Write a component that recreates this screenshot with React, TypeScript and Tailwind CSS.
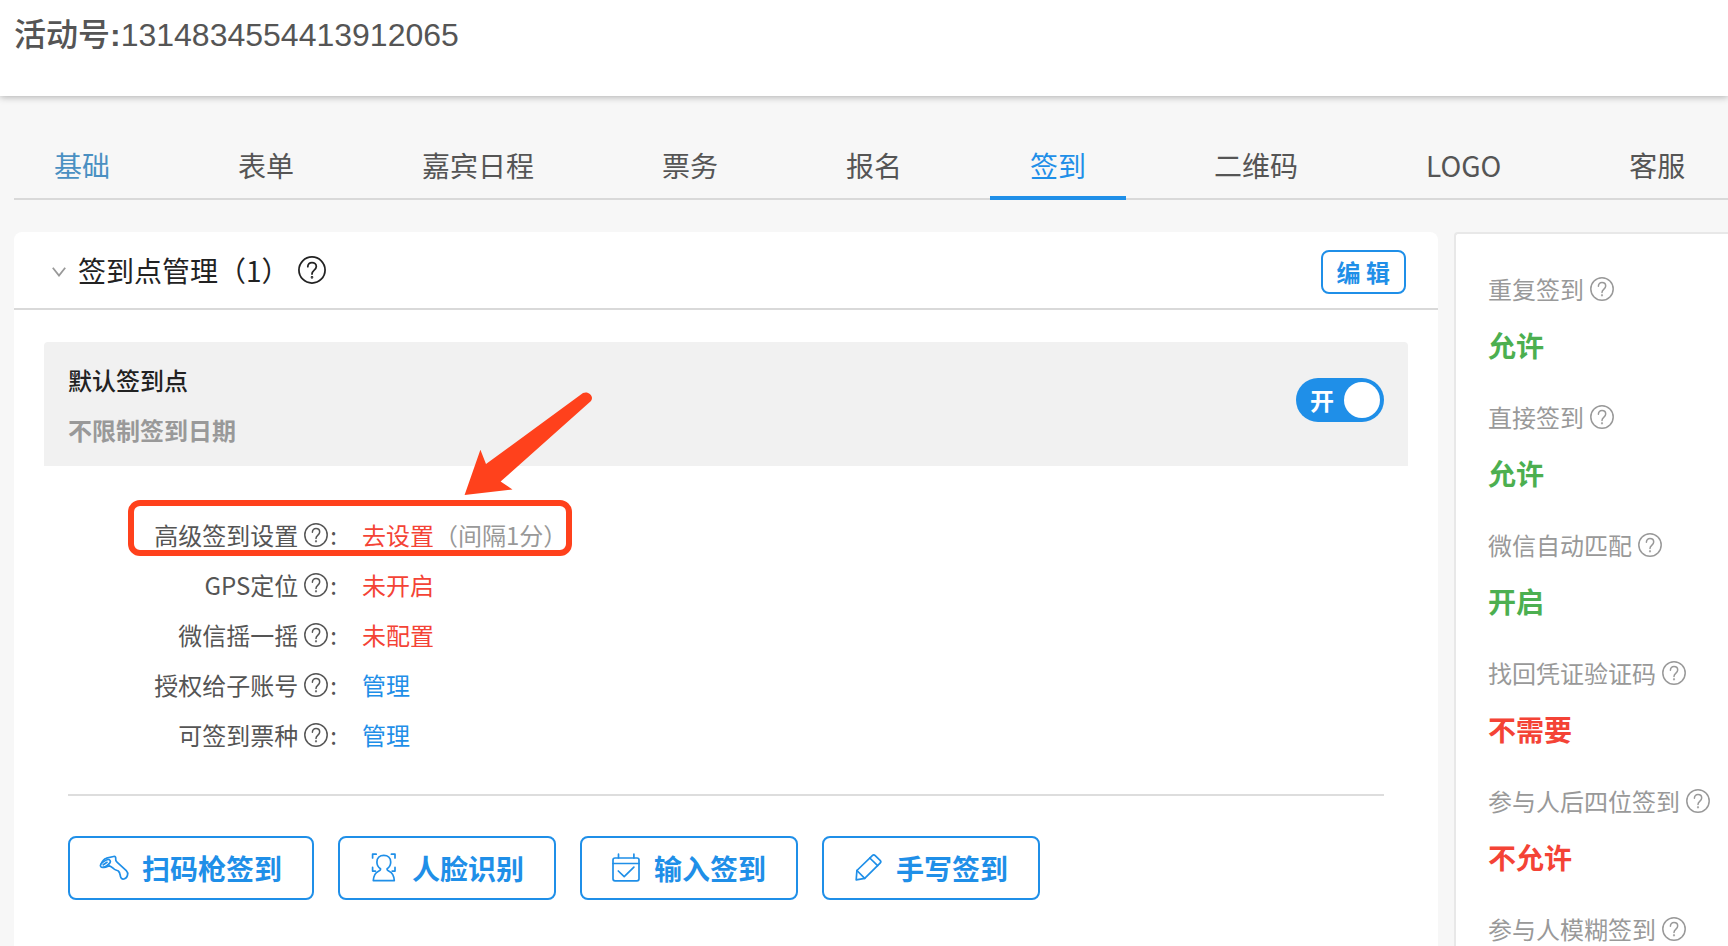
import { useState } from "react";
import type { ReactNode } from "react";

function HelpIcon({ large = false }: { large?: boolean }) {
  return (
    <svg
      viewBox="0 0 24 24"
      className={large ? "size-7 flex-none" : "size-6 flex-none"}
      fill="none"
      stroke="currentColor"
      strokeWidth="1.5"
      strokeLinecap="round"
      aria-hidden="true"
    >
      <circle cx="12" cy="12" r="11.2" />
      <path d="M8.4 9.2C8.4 7 9.9 5.6 12 5.6s3.700 1.400 3.700 3.400c0 1.600-.9 2.400-2 3.300-1.100.9-1.700 1.500-1.700 3.200" />
      <circle cx="12" cy="18.3" r="0.4" />
    </svg>
  );
}

function ActionIcon({ children }: { children: ReactNode }) {
  return (
    <svg
      viewBox="0 0 28 28"
      className="size-7 flex-none overflow-visible"
      fill="none"
      stroke="currentColor"
      strokeWidth="1.7"
      strokeLinecap="round"
      strokeLinejoin="round"
      aria-hidden="true"
    >
      {children}
    </svg>
  );
}

const scannerIcon = (
  <ActionIcon>
    <ellipse cx="5.4" cy="9.5" rx="5.6" ry="2.6" transform="rotate(-34 5.4 9.5)" />
    <path d="M3.2 10.8L7 8.3" />
    <path d="M1.2 9.7C2.2 7 4 5 6.5 4.2L13.6 2.5C15.4 2.2 16 3.2 15.7 5C15.5 6.5 16 7.3 17 8.1L26.3 16.6C27.7 18 28 19.6 27.5 21.2C27 23 25.7 24.6 23.9 25C22 25.3 20.9 24.3 20.5 22.6C20 20.2 20 18.3 18.3 17C17.1 16.1 15.4 16.3 14 15C12.5 13.6 11.3 12.2 9.3 11.8C7.5 11.7 6.7 13.7 3.4 13.3" />
  </ActionIcon>
);

const faceIcon = (
  <ActionIcon>
    <path d="M2.6 4V.2h3.6M21.4.2H25V4M2.6 13.4v3.7h2.8M25 13.4v3.7h-2.8" />
    <path d="M10.5 14.7C8 13.2 6.9 10.6 6.9 8c0-4 2.8-6.7 6.9-6.7S20.7 4 20.7 8c0 2.6-1.1 5.2-3.6 6.7-.3 1.3.5 1.8 2 2.5 3.6 1.6 4.9 4.600 5.200 9.400H3.300c.3-4.800 1.600-7.800 5.200-9.400 1.500-.7 2.300-1.200 2-2.500z" />
  </ActionIcon>
);

const calendarIcon = (
  <ActionIcon>
    <rect x="1" y="4" width="26" height="22.8" rx="2" />
    <path d="M1 9.5h26M6.5.2V4M21.9.2V4M6.3 17l5.9 5.6 9.7-9.4" />
  </ActionIcon>
);

const pencilIcon = (
  <ActionIcon>
    <path d="M2.2 25.8l.7-9.3L18.3 1.6c.9-.9 2-.9 2.9 0l4.9 4.7c.9.9.9 2 0 2.9L10.7 24.3z" />
    <path d="M2.9 16.5l7.8 7.8M15.8 4l7.8 7.7" />
  </ActionIcon>
);

const tabs = ["基础", "表单", "嘉宾日程", "票务", "报名", "签到", "二维码", "LOGO", "客服"];

const settings = [
  { label: "高级签到设置", value: "去设置", note: "（间隔1分）", tone: "red" },
  { label: "GPS定位", value: "未开启", tone: "red" },
  { label: "微信摇一摇", value: "未配置", tone: "red" },
  { label: "授权给子账号", value: "管理", tone: "blue" },
  { label: "可签到票种", value: "管理", tone: "blue" },
];

const actions = [
  { label: "扫码枪签到", icon: scannerIcon },
  { label: "人脸识别", icon: faceIcon },
  { label: "输入签到", icon: calendarIcon },
  { label: "手写签到", icon: pencilIcon },
];

const options = [
  { label: "重复签到", value: "允许", on: true },
  { label: "直接签到", value: "允许", on: true },
  { label: "微信自动匹配", value: "开启", on: true },
  { label: "找回凭证验证码", value: "不需要", on: false },
  { label: "参与人后四位签到", value: "不允许", on: false },
  { label: "参与人模糊签到" },
];

function tabTone(tab: string, active: string) {
  if (tab === active) return "text-[#1f8fe8]";
  return tab === "基础" ? "text-[#4a90c2]" : "text-[#555]";
}

export default function App() {
  const [active, setActive] = useState("签到");

  return (
    <div className="flex h-screen flex-col overflow-hidden bg-[#f7f7f7] font-['Noto_Sans_CJK_SC',sans-serif] text-[#555]">
      <header className="relative h-24 flex-none bg-white px-3.5 pt-[11px] shadow-[0_1px_7px_rgba(0,0,0,0.3)]">
        <h1 className="font-['Liberation_Sans','Noto_Sans_CJK_SC',sans-serif] text-[32px] leading-[48px] font-normal">
          <span className="font-medium">活动号</span>
          <span className="font-bold">:</span>1314834554413912065
        </h1>
      </header>

      <nav className="mt-8 ml-3.5 flex h-[72px] flex-none gap-12 border-b-2 border-[#d9d9d9] whitespace-nowrap">
        {tabs.map((tab) => (
          <button
            key={tab}
            type="button"
            onClick={() => setActive(tab)}
            className={`-mb-0.5 flex-none border-b-4 px-10 pt-1.5 text-[28px] leading-[62px] ${tabTone(tab, active)} ${
              tab === active ? "border-[#1f8fe8]" : "border-transparent"
            }`}
          >
            {tab}
          </button>
        ))}
      </nav>

      <main className="mt-8 ml-3.5 flex min-h-0 flex-1 gap-4">
        <section className="min-w-0 flex-1 rounded-t-lg bg-white">
          <div className="flex h-[78px] items-center border-b-2 border-[#d9d9d9] pr-8 pl-[38px]">
            <svg
              viewBox="0 0 14 10"
              className="mt-1 h-2.5 w-3.5 flex-none"
              fill="none"
              stroke="#999"
              strokeWidth="1.8"
              aria-hidden="true"
            >
              <path d="M0.8 0.8L7 8.6L13.2 0.8" />
            </svg>
            <h2 className="ml-3 text-[28px] leading-10 text-[#222]">签到点管理（1）</h2>
            <span className="ml-2 text-[#222]">
              <HelpIcon large />
            </span>
            <button
              type="button"
              className="mt-1 ml-auto h-11 rounded-lg border-2 border-[#1f8fe8] px-3.5 text-2xl leading-9 font-bold whitespace-nowrap text-[#1f8fe8]"
            >
              编 辑
            </button>
          </div>

          <div className="px-[30px] pt-8">
            <div className="flex h-[124px] items-start justify-between rounded-t bg-[#f1f1f1] px-6 pt-[13px]">
              <div>
                <h3 className="text-2xl leading-[50px] font-medium text-[#222]">默认签到点</h3>
                <p className="text-2xl leading-[50px] font-bold text-[#999]">不限制签到日期</p>
              </div>
              <label className="mt-[23px] flex h-11 w-[88px] cursor-pointer items-center justify-between rounded-full bg-[#1f8fe8] pr-1 pl-3.5 text-2xl leading-9 font-bold text-white">
                <input type="checkbox" className="sr-only" defaultChecked />
                开
                <span className="size-9 rounded-full bg-white" />
              </label>
            </div>

            <div className="relative mt-11 pl-6">
              <dl className="grid grid-cols-[269px_auto] justify-start gap-x-[25px] text-2xl leading-[50px]">
                {settings.map((row) => (
                  <div key={row.label} className="col-span-2 grid grid-cols-subgrid">
                    <dt className="flex items-center justify-end">
                      {row.label}
                      <span className="mr-0.5 ml-1.5">
                        <HelpIcon />
                      </span>
                      :
                    </dt>
                    <dd className="text-[#999]">
                      <a href="#" className={row.tone === "red" ? "text-[#f44336]" : "text-[#1f8fe8]"}>
                        {row.value}
                      </a>
                      {row.note}
                    </dd>
                  </div>
                ))}
              </dl>

              <div className="pointer-events-none absolute -top-2.5 left-[84px] h-14 w-[444px] rounded-xl border-[6px] border-[#ff411c]" />
              <svg
                viewBox="0 0 130 104"
                className="pointer-events-none absolute -top-[119px] left-[420px] h-[104px] w-[130px]"
                fill="#ff411c"
                aria-hidden="true"
              >
                <path d="M0.6 104L16.4 58.7L22 73L119 2C124 -0.5 130.5 5 127 10L36.6 90.5L48.5 98.4Z" />
              </svg>
            </div>

            <div className="mx-6 mt-[34px] flex flex-wrap gap-6 border-t-2 border-[#ddd] pt-10">
              {actions.map((action) => (
                <button
                  key={action.label}
                  type="button"
                  className="flex h-16 items-center gap-3.5 rounded-lg border-2 border-[#1f8fe8] px-[30px] text-[28px] leading-10 font-bold text-[#1f8fe8]"
                >
                  {action.icon}
                  {action.label}
                </button>
              ))}
            </div>
          </div>
        </section>

        <aside className="w-[274px] flex-none rounded-tl border-t-2 border-l-2 border-[#e8e8e8] bg-white pt-[29px] pl-8 whitespace-nowrap">
          {options.map((item) => (
            <div key={item.label} className="h-32">
              <p className="flex items-center gap-1.5 text-2xl leading-[52px] text-[#999]">
                {item.label}
                <HelpIcon />
              </p>
              {item.value && (
                <p className={`text-[28px] leading-[60px] font-bold ${item.on ? "text-[#4caf50]" : "text-[#f44336]"}`}>
                  {item.value}
                </p>
              )}
            </div>
          ))}
        </aside>
      </main>
    </div>
  );
}
